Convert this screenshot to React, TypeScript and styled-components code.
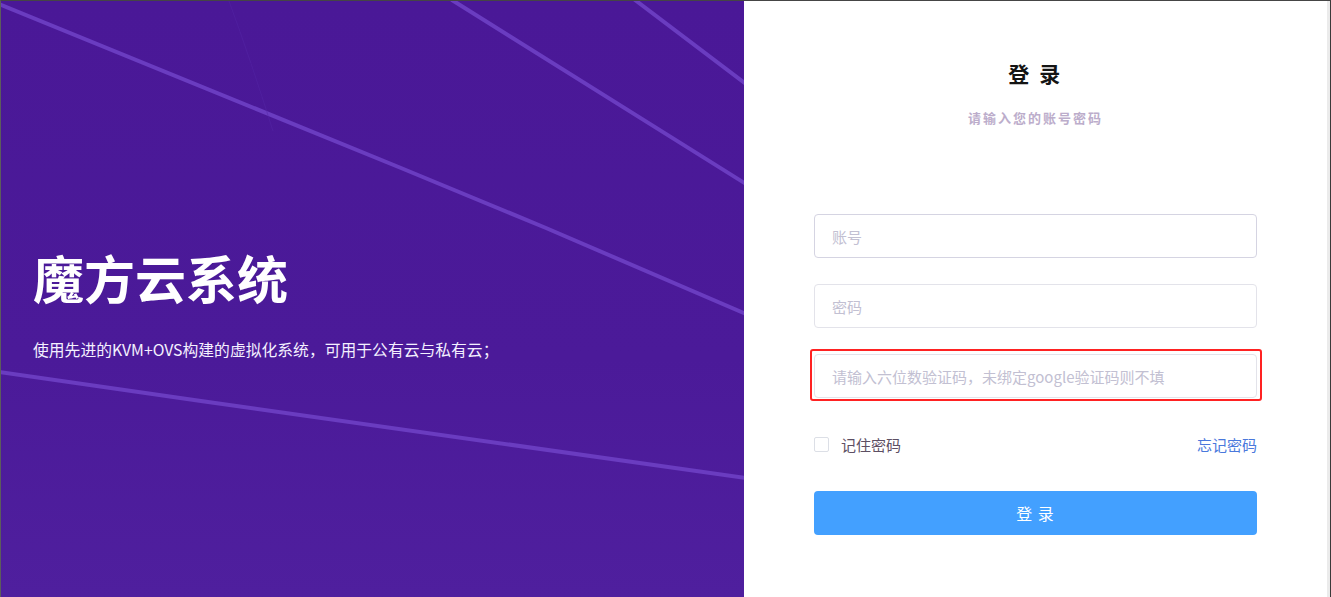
import React from "react";
import styled, { createGlobalStyle } from "styled-components";

const GlobalStyle = createGlobalStyle`
  html, body {
    margin: 0;
    padding: 0;
    background: #ffffff;
  }
  body {
    font-family: "Noto Sans CJK SC", "Noto Sans", "Liberation Sans", sans-serif;
  }
  * { box-sizing: border-box; }
`;

const Frame = styled.div`
  width: 1331px;
  height: 597px;
  display: flex;
  border-top: 1px solid #454545;
  border-left: 1px solid #5c5c5c;
  border-right: 1px solid #3a3a3a;
  overflow: hidden;
`;

const Hero = styled.section`
  position: relative;
  width: 743px;
  flex: none;
  background: linear-gradient(180deg, #4a1897 0%, #4b1a99 60%, #4f1f9e 100%);
  display: flex;
  flex-direction: column;
  padding: 246px 0 0 32px;
  overflow: hidden;
`;

const HeroArt = styled.svg`
  position: absolute;
  inset: 0;
  width: 100%;
  height: 100%;
  pointer-events: none;
`;

const HeroTitle = styled.h1`
  position: relative;
  margin: 0;
  font-size: 51px;
  line-height: 60px;
  font-weight: 700;
  color: #ffffff;
  letter-spacing: 0px;
`;

const HeroText = styled.p`
  position: relative;
  margin: 31px 0 0;
  font-size: 15.8px;
  line-height: 24px;
  color: #f4f0ff;
`;

const Side = styled.section`
  flex: 1;
  background: #ffffff;
  border-right: 3px solid #ebebeb;
  display: flex;
  justify-content: center;
`;

const Form = styled.div`
  width: 443px;
  display: flex;
  flex-direction: column;
  padding-top: 57px;
`;

const Heading = styled.h2`
  margin: 0;
  text-align: center;
  font-size: 21px;
  line-height: 30px;
  font-weight: 700;
  color: #141414;
  letter-spacing: 2.5px;
`;

const Hint = styled.p`
  margin: 20px 0 0;
  text-align: center;
  font-size: 13px;
  line-height: 20px;
  font-weight: 700;
  color: #bcadcb;
  letter-spacing: 2px;
`;

const Fields = styled.div`
  margin-top: 86px;
  display: flex;
  flex-direction: column;
  gap: 26px;
`;

const FieldWrap = styled.div<{ $marked?: boolean }>`
  position: relative;
  ${(p) =>
    p.$marked
      ? `
    &::after {
      content: "";
      position: absolute;
      left: -4px;
      right: -5px;
      top: -5px;
      bottom: -3px;
      border: 2.5px solid #ff2222;
      border-radius: 3px;
      pointer-events: none;
    }
  `
      : ""}
`;

const Input = styled.input<{ $soft?: boolean }>`
  display: block;
  width: 100%;
  height: 44px;
  padding: 0 17px;
  border: 1px solid ${(p) => (p.$soft ? "#e3e3ea" : "#d5d4e2")};
  border-radius: 4px;
  font-family: inherit;
  font-size: 15px;
  color: #333;
  outline: none;
  background: #fff;
  &::placeholder {
    color: #c2c0d2;
  }
`;

const OptionsRow = styled.div`
  margin-top: 34px;
  display: flex;
  align-items: center;
  justify-content: space-between;
  height: 24px;
`;

const Remember = styled.label`
  display: flex;
  align-items: center;
  gap: 12px;
  font-size: 15px;
  color: #5d4f63;
  cursor: pointer;
`;

const Box = styled.span`
  width: 15px;
  height: 15px;
  border: 1px solid #dcdfe6;
  border-radius: 2px;
  background: #fff;
`;

const Forgot = styled.a`
  font-size: 15px;
  color: #4a78dc;
  text-decoration: none;
  cursor: pointer;
`;

const Submit = styled.button`
  margin-top: 35px;
  width: 100%;
  height: 44px;
  border: none;
  border-radius: 4px;
  background: #43a0ff;
  color: #ffffff;
  font-family: inherit;
  font-size: 16px;
  letter-spacing: 1px;
  cursor: pointer;
`;

export default function App() {
  return (
    <>
      <GlobalStyle />
      <Frame>
        <Hero>
          <HeroArt viewBox="0 0 743 596" preserveAspectRatio="none">
            <g stroke="#6a3cc0" strokeWidth="4" fill="none" strokeLinecap="round" strokeLinejoin="round">
              <path d="M-2 3 L 400 167 L 545 227 L 745 313" />
              <path d="M451 -1 L 745 183" />
              <path d="M634 -1 L 745 83" />
              <path d="M-2 371 L 200 400 L 745 477" />
            </g>
            <path d="M228 0 Q 250 60 272 130" stroke="#5426a6" strokeWidth="1" fill="none" opacity="0.5" />
          </HeroArt>
          <HeroTitle>魔方云系统</HeroTitle>
          <HeroText>使用先进的KVM+OVS构建的虚拟化系统，可用于公有云与私有云；</HeroText>
        </Hero>
        <Side>
          <Form>
            <Heading>登 录</Heading>
            <Hint>请输入您的账号密码</Hint>
            <Fields>
              <FieldWrap>
                <Input type="text" placeholder="账号" />
              </FieldWrap>
              <FieldWrap>
                <Input type="password" placeholder="密码" $soft />
              </FieldWrap>
              <FieldWrap $marked>
                <Input type="text" placeholder="请输入六位数验证码，未绑定google验证码则不填" $soft />
              </FieldWrap>
            </Fields>
            <OptionsRow>
              <Remember>
                <Box />
                记住密码
              </Remember>
              <Forgot>忘记密码</Forgot>
            </OptionsRow>
            <Submit type="button">登 录</Submit>
          </Form>
        </Side>
      </Frame>
    </>
  );
}
